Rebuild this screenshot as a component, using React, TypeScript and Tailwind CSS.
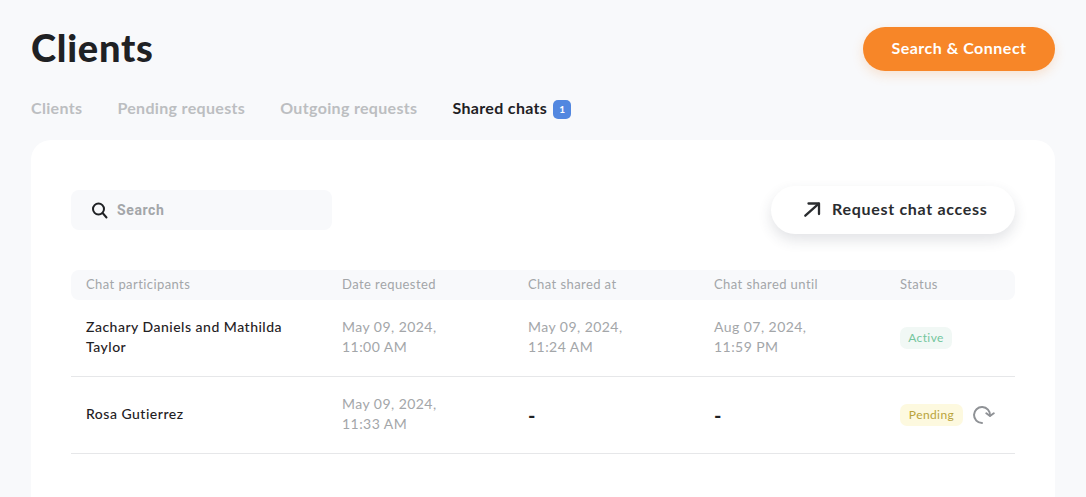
const tabs = ['Pending requests', 'Outgoing requests']
const rowClass = 'grid grid-cols-[256px_186px_186px_186px_1fr] items-center pl-[15px]'

function DateCell({ day, time }: { day: string; time: string }) {
  return (
    <div className="pb-[2px] text-[14px] leading-[20px] tracking-[0.45px] text-[#a3a6a9]">
      {day}
      <br />
      {time}
    </div>
  )
}

export default function App() {
  return (
    <div className="h-[497px] overflow-hidden bg-[#f8f9fb] px-[31px] pt-[27px] font-['Lato',sans-serif] text-[#1f2124]">
      <div className="flex h-[44px] items-center justify-between">
        <h1 className="pb-[4px] text-[38px] font-black leading-[40px] tracking-[0.75px]">Clients</h1>
        <button className="h-[44px] w-[192px] rounded-full bg-[#f78628] pb-[2px] text-[16px] font-bold tracking-[0.5px] text-white shadow-[0_4px_12px_rgba(247,134,40,0.2)]">
          Search &amp; Connect
        </button>
      </div>

      <div className="mt-[25px] flex h-[24px] items-center gap-[35px] text-[16px] font-bold tracking-[0.33px] text-[#bcbec1]">
        <span>Clients</span>
        {tabs.map((t) => (
          <span key={t}>{t}</span>
        ))}
        <span className="flex items-center gap-[6px] text-[#1f2124]">
          Shared chats
          <span className="mt-[2px] flex h-[19px] w-[18px] items-center justify-center rounded-[5px] bg-[#5287e0] text-[10px] font-bold text-white">
            1
          </span>
        </span>
      </div>

      <div className="mt-[20px] h-[400px] rounded-t-[20px] bg-white px-[40px] pt-[46px]">
        <div className="flex h-[48px] items-center justify-between">
          <div className="flex h-[40px] w-[261px] items-center gap-[9px] rounded-[8px] bg-[#f8f9fb] pl-[19px]">
            <svg width="18" height="18" viewBox="0 0 18 18" fill="none" stroke="#1f2124" strokeWidth="2" strokeLinecap="round">
              <circle cx="8.5" cy="8" r="5.5" />
              <path d="M12.6 12 L16.5 16.5" />
            </svg>
            <span className="font-['Roboto',sans-serif] text-[14px] font-bold tracking-[0.6px] text-[#a3a6a9]">Search</span>
          </div>
          <button className="flex h-[48px] w-[244px] items-center gap-[8px] rounded-full bg-white pb-[2px] pl-[29px] text-[16px] font-bold tracking-[0.7px] text-[#2a2c2f] shadow-[0_6px_14px_rgba(50,60,80,0.14)]">
            <svg width="24" height="24" viewBox="0 0 24 24" fill="none" stroke="#2a2c2f" strokeWidth="2.3" strokeLinecap="round" strokeLinejoin="round">
              <path d="M5.3 18.7 L18.5 6.8" />
              <path d="M8.5 6.5 H19 V17" />
            </svg>
            Request chat access
          </button>
        </div>

        <div className={`${rowClass} mt-[36px] h-[30px] rounded-[8px] bg-[#f8f9fb] text-[13px] tracking-[0.42px] text-[#a3a6a9]`}>
          <span>Chat participants</span>
          <span>Date requested</span>
          <span>Chat shared at</span>
          <span>Chat shared until</span>
          <span>Status</span>
        </div>

        <div className={`${rowClass} h-[77px] border-b border-[#e6e7e9]`}>
          <div className="w-[210px] pb-[2px] text-[14px] font-medium leading-[20px] tracking-[0.5px]">
            Zachary Daniels and Mathilda Taylor
          </div>
          <DateCell day="May 09, 2024," time="11:00 AM" />
          <DateCell day="May 09, 2024," time="11:24 AM" />
          <DateCell day="Aug 07, 2024," time="11:59 PM" />
          <div className="flex">
            <span className="flex h-[22px] w-[52px] items-center justify-center rounded-[7px] bg-[#f1f8f5] text-[12px] tracking-[0.4px] text-[#74c69d]">
              Active
            </span>
          </div>
        </div>

        <div className={`${rowClass} h-[77px] border-b border-[#e6e7e9]`}>
          <div className="pb-[3px] text-[14px] font-medium tracking-[0.5px]">Rosa Gutierrez</div>
          <DateCell day="May 09, 2024," time="11:33 AM" />
          <div className="text-[20px] font-bold leading-[24px]">-</div>
          <div className="text-[20px] font-bold leading-[24px]">-</div>
          <div className="flex items-center gap-[9px]">
            <span className="flex h-[22px] w-[63px] items-center justify-center rounded-[7px] bg-[#fdf9df] text-[12px] tracking-[0.4px] text-[#b9a33a]">
              Pending
            </span>
            <svg width="24" height="24" viewBox="0 0 24 24" fill="none" stroke="#8f9296" strokeWidth="2" strokeLinecap="round" strokeLinejoin="round">
              <path d="M10 20 A8 8 0 1 1 18 12.5" />
              <path d="M14.3 10.3 L18 13 L21.8 10.3" />
            </svg>
          </div>
        </div>
      </div>
    </div>
  )
}
